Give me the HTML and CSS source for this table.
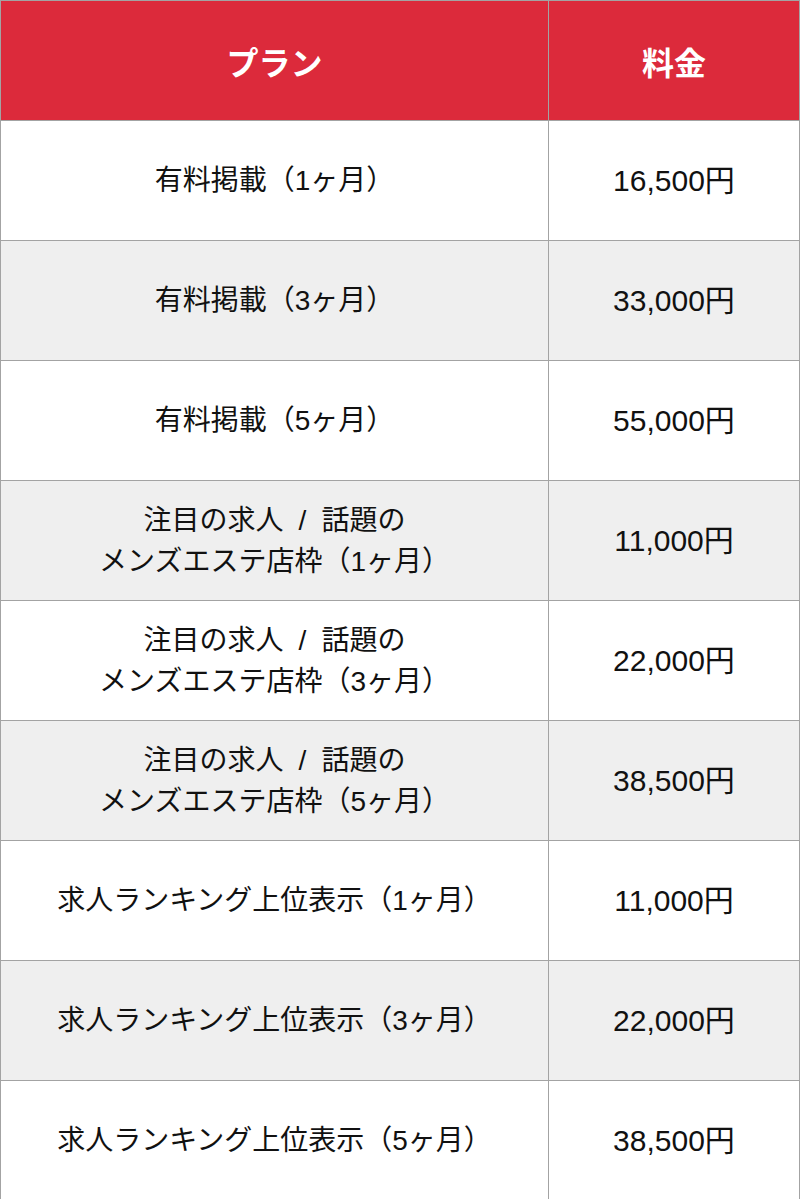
FILE: index.html
```html
<!DOCTYPE html>
<html lang="ja">
<head>
<meta charset="utf-8">
<link rel="stylesheet" href="styles.css">
</head>
<body>
<table class="price-table">
  <thead>
    <tr><th class="col-plan">プラン</th><th class="col-price">料金</th></tr>
  </thead>
  <tbody>
    <tr><td class="plan">有料掲載（1ヶ月）</td><td class="price">16,500円</td></tr>
    <tr class="alt"><td class="plan">有料掲載（3ヶ月）</td><td class="price">33,000円</td></tr>
    <tr><td class="plan">有料掲載（5ヶ月）</td><td class="price">55,000円</td></tr>
    <tr class="alt"><td class="plan">注目の求人<span class="sep">/</span>話題の<br>メンズエステ店枠（1ヶ月）</td><td class="price">11,000円</td></tr>
    <tr><td class="plan">注目の求人<span class="sep">/</span>話題の<br>メンズエステ店枠（3ヶ月）</td><td class="price">22,000円</td></tr>
    <tr class="alt"><td class="plan">注目の求人<span class="sep">/</span>話題の<br>メンズエステ店枠（5ヶ月）</td><td class="price">38,500円</td></tr>
    <tr><td class="plan">求人ランキング上位表示（1ヶ月）</td><td class="price">11,000円</td></tr>
    <tr class="alt"><td class="plan">求人ランキング上位表示（3ヶ月）</td><td class="price">22,000円</td></tr>
    <tr><td class="plan">求人ランキング上位表示（5ヶ月）</td><td class="price">38,500円</td></tr>
  </tbody>
</table>
</body>
</html>
```
FILE: styles.css
```css
html, body {
  margin: 0;
  padding: 0;
  background: #ffffff;
}
.price-table {
  width: 800px;
  border-collapse: collapse;
  table-layout: fixed;
  font-family: "Liberation Sans", "Noto Sans CJK JP", sans-serif;
  color: #111111;
}
.price-table th,
.price-table td {
  border: 1px solid #a3a3a3;
  height: 120px;
  padding: 0;
  text-align: center;
  vertical-align: middle;
  box-sizing: border-box;
}
.col-plan { width: 548px; }
.price-table th {
  background: #dc2a3b;
  color: #ffffff;
  font-size: 32px;
  font-weight: bold;
}
.price-table td {
  font-size: 28px;
  line-height: 41px;
}
.price-table td.price {
  font-size: 30px;
}
.sep {
  display: inline-block;
  margin: 0 15px;
}
.price-table tr.alt td {
  background: #efefef;
}
```
